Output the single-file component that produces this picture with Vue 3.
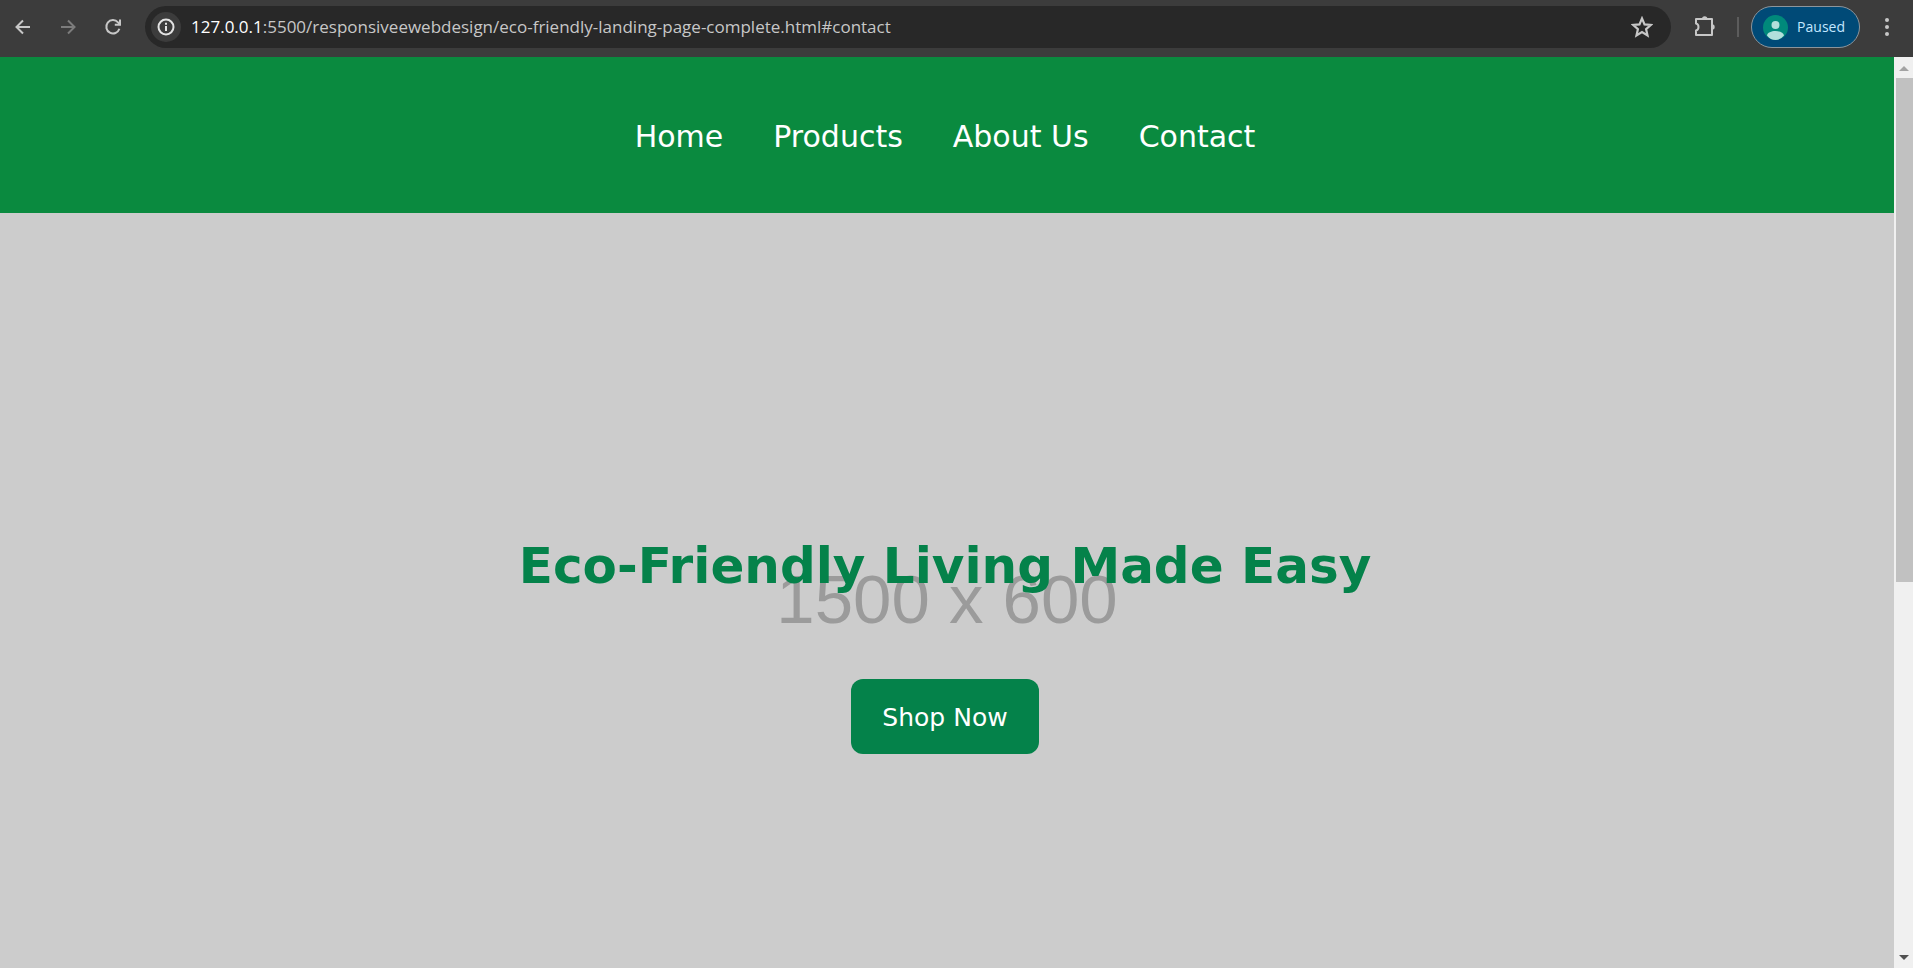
<script setup>
const links = ['Home', 'Products', 'About Us', 'Contact']
</script>

<template>
  <div class="window">
    <header class="toolbar">
      <div class="nav-buttons">
        <button type="button" aria-label="Back">
          <svg viewBox="0 0 18 18"><path d="M16 9H3M9 2.500 2.500 9 9 15.500" /></svg>
        </button>
        <button type="button" class="dim" aria-label="Forward">
          <svg viewBox="0 0 18 18"><path d="M2 9h13M9 2.500 15.500 9 9 15.500" /></svg>
        </button>
        <button type="button" aria-label="Reload">
          <svg viewBox="0 0 18 18">
            <path d="M15.400 10.800A6.700 6.700 0 1 1 14 4.300L16 6.600" />
            <path d="M16 1.500V6.700H10.800" />
          </svg>
        </button>
      </div>
      <div class="address">
        <button type="button" class="info" aria-label="Site information">
          <svg viewBox="0 0 18 18">
            <circle cx="9" cy="9" r="7.500" />
            <path d="M9 8v5M9 4.800v2" />
          </svg>
        </button>
        <a class="url" href="#contact"><span class="host">127.0.0.1</span>:5500/responsiveewebdesign/eco-friendly-landing-page-complete.html#contact</a>
        <button type="button" class="star" aria-label="Bookmark">
          <svg viewBox="0 0 20 20">
            <path d="M10 2.200 12.300 7.600 18.100 8.100 13.700 11.900 15 17.600 10 14.600 5 17.600 6.300 11.900 1.900 8.100 7.700 7.600Z" />
          </svg>
        </button>
      </div>
      <button type="button" class="puzzle" aria-label="Extensions">
        <svg viewBox="0 0 22 22">
          <path class="line" d="M2 3H18V19H2V14.500C5.300 14 5.300 8 2 7.500Z" />
          <path class="knob" d="M8 3a2.700 2.700 0 0 1 5.400 0ZM18 8.300a2.700 2.700 0 0 1 0 5.400Z" />
        </svg>
      </button>
      <span class="divider"></span>
      <button type="button" class="profile">
        <svg viewBox="0 0 25 25">
          <circle cx="12.500" cy="12.500" r="12.500" fill="#00897b" />
          <circle cx="12.500" cy="10" r="4" fill="#b2dfdb" />
          <path d="M4 20.500C4.500 14.500 20.500 14.500 21 20.500Q17.500 25 12.500 25T4 20.500Z" fill="#b2dfdb" />
        </svg>
        Paused
      </button>
      <button type="button" class="menu" aria-label="Menu">
        <svg viewBox="0 0 6 20">
          <circle cx="3" cy="3" r="2" /><circle cx="3" cy="10" r="2" /><circle cx="3" cy="17" r="2" />
        </svg>
      </button>
    </header>

    <div class="viewport">
      <main class="page">
        <nav class="site-nav">
          <a v-for="link in links" :key="link" href="#">{{ link }}</a>
        </nav>
        <section class="hero">
          <span class="backdrop">1500 x 600</span>
          <h1>Eco-Friendly Living Made Easy</h1>
          <a class="shop" href="#">Shop Now</a>
        </section>
      </main>
      <div class="scrollbar">
        <svg class="arrow" viewBox="0 0 19 21"><path d="M5 14 10 9 15 14Z" fill="#a3a3a3" /></svg>
        <div class="track"><div class="thumb"></div></div>
        <svg class="arrow" viewBox="0 0 19 21"><path d="M5 8 15 8 10 13Z" fill="#505050" /></svg>
      </div>
    </div>
  </div>
</template>

<style>
body {
  margin: 0;
}
</style>

<style scoped>
.window {
  display: flex;
  flex-direction: column;
  min-height: 100vh;
  font-family: "DejaVu Sans", Verdana, sans-serif;
}
button {
  display: flex;
  align-items: center;
  justify-content: center;
  padding: 0;
  border: 0;
  background: none;
  color: #c7c7c7;
}
svg {
  display: block;
  flex: none;
}
.toolbar {
  display: flex;
  align-items: center;
  box-sizing: border-box;
  height: 57px;
  padding: 0 23px 3px 14px;
  background: #3c3c3c;
}
.nav-buttons {
  display: flex;
  gap: 27px;
  margin-right: 23px;
}
.nav-buttons svg,
.info svg {
  width: 18px;
  height: 18px;
  fill: none;
  stroke: currentColor;
  stroke-width: 2;
}
.nav-buttons .dim {
  color: #7c7c7c;
}
.address {
  flex: 1;
  display: flex;
  align-items: center;
  height: 42px;
  box-sizing: border-box;
  padding: 0 18px 0 6px;
  border-radius: 21px;
  background: #282828;
}
.info {
  width: 30px;
  height: 30px;
  border-radius: 15px;
  background: #3c3c3c;
  color: #e3e3e3;
}
.url {
  flex: 1;
  margin-left: 10px;
  font: 17px/24px "Open Sans", "Segoe UI", sans-serif;
  color: #c7c7c7;
  text-decoration: none;
}
.host {
  color: #fff;
}
.star svg {
  width: 22px;
  height: 22px;
  fill: none;
  stroke: currentColor;
  stroke-width: 2;
}
.puzzle {
  margin-left: 23px;
}
.puzzle svg {
  width: 22px;
  height: 22px;
}
.puzzle .line {
  fill: none;
  stroke: currentColor;
  stroke-width: 2;
  stroke-linejoin: round;
}
.puzzle .knob {
  fill: currentColor;
}
.divider {
  width: 2px;
  height: 20px;
  margin: 0 12px 0 21px;
  background: #5c5c5c;
}
.profile {
  gap: 9px;
  box-sizing: border-box;
  height: 42px;
  padding: 0 14px 0 11px;
  border: 1px solid #8c959c;
  border-radius: 21px;
  background: #004a77;
  color: #c2e7ff;
  font: 14px/20px "Open Sans", "Segoe UI", sans-serif;
}
.profile svg {
  width: 25px;
  height: 25px;
}
.menu {
  margin-left: 24px;
}
.menu svg {
  width: 6px;
  height: 20px;
  fill: currentColor;
}
.viewport {
  flex: 1;
  display: flex;
}
.page {
  flex: 1;
  display: flex;
  flex-direction: column;
}
.site-nav {
  display: flex;
  justify-content: center;
  gap: 50px;
  padding: 62px 4px 58px 0;
  background: #0a8a3f;
  font-size: 30px;
  line-height: 36px;
}
.site-nav a {
  color: #fff;
  text-decoration: none;
}
.hero {
  position: relative;
  flex: 1;
  display: flex;
  flex-direction: column;
  align-items: center;
  justify-content: center;
  gap: 83px;
  padding: 108px 4px 0 0;
  background: #ccc;
}
.backdrop {
  position: absolute;
  inset: 18px 0 0;
  display: flex;
  align-items: center;
  justify-content: center;
  font: 69px/80px "Liberation Sans", Arial, sans-serif;
  color: #9b9b9b;
}
h1 {
  position: relative;
  margin: 0;
  font-size: 50px;
  line-height: 60px;
  color: #04824a;
}
.shop {
  position: relative;
  padding: 24px 31px 21px;
  border-radius: 12px;
  background: #04824a;
  color: #fff;
  font-size: 25px;
  line-height: 30px;
  text-decoration: none;
}
.scrollbar {
  display: flex;
  flex-direction: column;
  width: 19px;
  background: #f0f0f0;
}
.arrow {
  width: 19px;
  height: 21px;
}
.track {
  flex: 1;
  padding-left: 2px;
}
.thumb {
  height: 58%;
  background: #c1c1c1;
}
</style>
